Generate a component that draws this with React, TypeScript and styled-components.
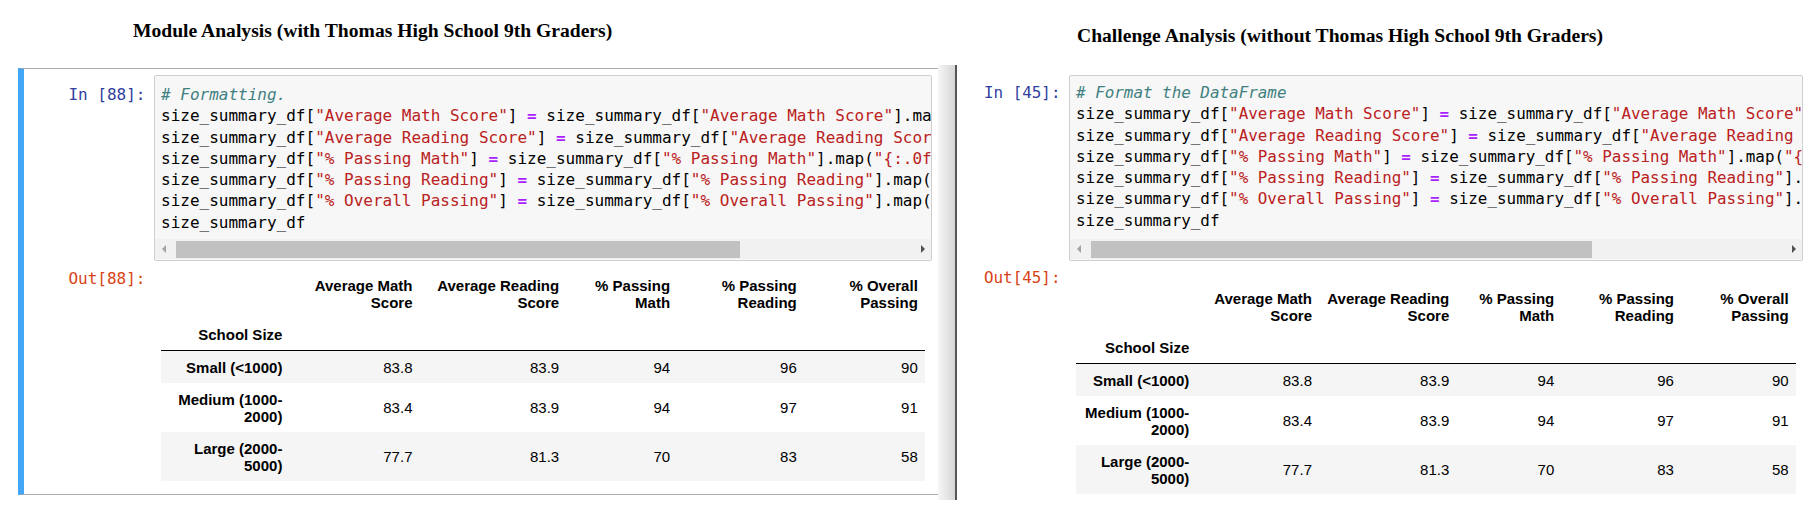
import React from 'react';
import styled, { createGlobalStyle } from 'styled-components';

const MONO = `"DejaVu Sans Mono", "Liberation Mono", monospace`;

const GlobalStyle = createGlobalStyle`
  html, body {
    margin: 0;
    padding: 0;
    background: #ffffff;
  }
  body {
    font-family: "Liberation Sans", Arial, sans-serif;
    overflow: hidden;
  }
`;

const Page = styled.div`
  display: flex;
  align-items: flex-start;
  width: 1813px;
  height: 516px;
  overflow: hidden;
`;

const Panel = styled.section<{ $width?: number }>`
  flex: ${(p) => (p.$width ? `0 0 ${p.$width}px` : '1 1 0')};
  min-width: 0;
  display: flex;
  flex-direction: column;
`;

const Heading = styled.h4<{ $top: number; $left: number }>`
  margin: 0;
  height: 68px;
  box-sizing: border-box;
  padding: ${(p) => p.$top}px 0 0 ${(p) => p.$left}px;
  font: bold 19.6px/24px "Liberation Serif", "Times New Roman", serif;
  color: #000;
  white-space: nowrap;
`;

// the grey edge between the two notebook captures
const Divider = styled.div`
  flex: 0 0 19px;
  box-sizing: border-box;
  margin-top: 65px;
  height: 435px;
  background: linear-gradient(to right, #f6f6f6, #d6d6d6);
  border-right: 2px solid #555555;
`;

const Cell = styled.div<{ $selected?: boolean; $right: number }>`
  display: flex;
  flex-direction: column;
  margin-left: ${(p) => (p.$selected ? 18 : 0)}px;
  padding: 6px ${(p) => p.$right}px 13px 0;
  border-top: 1px solid ${(p) => (p.$selected ? '#ababab' : 'transparent')};
  border-bottom: 1px solid ${(p) => (p.$selected ? '#ababab' : 'transparent')};
  border-left: ${(p) => (p.$selected ? '6px solid #42a5f5' : 'none')};
`;

const Row = styled.div<{ $gap?: number }>`
  display: flex;
  align-items: flex-start;
  margin-top: ${(p) => p.$gap ?? 0}px;
`;

const Prompt = styled.div<{ $width: number; $size: number; $out?: boolean; $top?: number }>`
  flex: 0 0 ${(p) => p.$width}px;
  box-sizing: border-box;
  padding: ${(p) => p.$top ?? 0}px 8.5px 0 0;
  text-align: right;
  font: ${(p) => p.$size}px/21.3px ${MONO};
  color: ${(p) => (p.$out ? '#d84315' : '#303f9f')};
  white-space: pre;
`;

const CodeBox = styled.div`
  flex: 1 1 0;
  min-width: 0;
  box-sizing: border-box;
  background: #f7f7f7;
  border: 1px solid #cfcfcf;
  border-radius: 2px;
  padding-bottom: 1px;
  overflow: hidden;
`;

const Code = styled.div<{ $top: number; $bottom: number; $size: number }>`
  padding: ${(p) => p.$top}px 0 ${(p) => p.$bottom}px 6px;
  font: ${(p) => p.$size}px/21.3px ${MONO};
  color: #000;
  overflow: hidden;
`;

const CodeLine = styled.div`
  white-space: pre;
`;

const Comment = styled.span`
  color: #408080;
  font-style: italic;
`;

const Str = styled.span`
  color: #ba2121;
`;

const Op = styled.span`
  color: #aa22ff;
  font-weight: bold;
`;

const Scrollbar = styled.div`
  display: flex;
  align-items: center;
  height: 20px;
  background: #f1f1f1;
`;

const ScrollArrow = styled.span<{ $dir: 'left' | 'right' }>`
  flex: 0 0 17px;
  height: 17px;
  display: flex;
  align-items: center;
  justify-content: center;

  &::before {
    content: '';
    border-top: 4px solid transparent;
    border-bottom: 4px solid transparent;
    ${(p) =>
      p.$dir === 'left'
        ? 'border-right: 4px solid #a3a3a3;'
        : 'border-left: 4px solid #505050;'}
  }
`;

const Thumb = styled.span<{ $width: number }>`
  flex: 0 0 ${(p) => p.$width}px;
  height: 17px;
  margin-left: 4px;
  background: #c1c1c1;
`;

const Spacer = styled.span`
  flex: 1 1 auto;
`;

const Frame = styled.table<{ $top: number; $width: number }>`
  border-collapse: collapse;
  table-layout: fixed;
  width: ${(p) => p.$width}px;
  margin: ${(p) => p.$top}px 0 0 7px;
  font: 15px/17px "Liberation Sans", Arial, sans-serif;
  color: #000;
`;

const ColWidth = styled.col<{ $w: number }>`
  width: ${(p) => p.$w}px;
`;

const HeadRow = styled.tr<{ $ruled?: boolean }>`
  border-bottom: ${(p) => (p.$ruled ? '1px solid #000' : 'none')};
`;

const BodyRow = styled.tr<{ $shade?: boolean }>`
  background: ${(p) => (p.$shade ? '#f5f5f5' : 'transparent')};
`;

const HeadCell = styled.th`
  padding: 7.5px;
  text-align: right;
  vertical-align: middle;
  font-weight: bold;
  white-space: nowrap;
`;

const DataCell = styled.td`
  padding: 7.5px;
  text-align: right;
  vertical-align: middle;
  white-space: nowrap;
`;

const CODE = [
  'size_summary_df["Average Math Score"] = size_summary_df["Average Math Score"].map("{:.1f}".format)',
  'size_summary_df["Average Reading Score"] = size_summary_df["Average Reading Score"].map("{:.1f}".format)',
  'size_summary_df["% Passing Math"] = size_summary_df["% Passing Math"].map("{:.0f}".format)',
  'size_summary_df["% Passing Reading"] = size_summary_df["% Passing Reading"].map("{:.0f}".format)',
  'size_summary_df["% Overall Passing"] = size_summary_df["% Overall Passing"].map("{:.0f}".format)',
  'size_summary_df',
];

const HEADERS = [
  ['Average Math', 'Score'],
  ['Average Reading', 'Score'],
  ['% Passing', 'Math'],
  ['% Passing', 'Reading'],
  ['% Overall', 'Passing'],
];

const ROWS = [
  { label: ['Small (<1000)'], values: ['83.8', '83.9', '94', '96', '90'] },
  { label: ['Medium (1000-', '2000)'], values: ['83.4', '83.9', '94', '97', '91'] },
  { label: ['Large (2000-', '5000)'], values: ['77.7', '81.3', '70', '83', '58'] },
];

const highlight = (line: string) => {
  if (line.startsWith('#')) return <Comment>{line}</Comment>;
  return line.split(/("[^"]*"| = )/).map((part, i) => {
    if (part.startsWith('"')) return <Str key={i}>{part}</Str>;
    if (part === ' = ')
      return (
        <React.Fragment key={i}>
          {' '}
          <Op>=</Op>{' '}
        </React.Fragment>
      );
    return <React.Fragment key={i}>{part}</React.Fragment>;
  });
};

const Lines = ({ lines }: { lines: string[] }) => (
  <>
    {lines.map((l, i) => (
      <React.Fragment key={i}>
        {i > 0 && <br />}
        {l}
      </React.Fragment>
    ))}
  </>
);

interface NotebookCellProps {
  selected?: boolean;
  right: number;
  promptWidth: number;
  monoSize: number;
  exec: number;
  comment: string;
  codeTop: number;
  codeBottom: number;
  thumb: number;
  outGap: number;
  tableTop: number;
  widths: number[];
}

const NotebookCell: React.FC<NotebookCellProps> = ({
  selected,
  right,
  promptWidth,
  monoSize,
  exec,
  comment,
  codeTop,
  codeBottom,
  thumb,
  outGap,
  tableTop,
  widths,
}) => {
  const total = widths.reduce((s, w) => s + w, 0);
  return (
    <Cell $selected={selected} $right={right}>
      {/* input */}
      <Row>
        <Prompt $width={promptWidth} $size={monoSize} $top={codeTop + 1}>{`In [${exec}]:`}</Prompt>
        <CodeBox>
          <Code $top={codeTop} $bottom={codeBottom} $size={monoSize}>
            {[comment, ...CODE].map((line, i) => (
              <CodeLine key={i}>{highlight(line)}</CodeLine>
            ))}
          </Code>
          <Scrollbar>
            <ScrollArrow $dir="left" />
            <Thumb $width={thumb} />
            <Spacer />
            <ScrollArrow $dir="right" />
          </Scrollbar>
        </CodeBox>
      </Row>

      {/* output */}
      <Row $gap={outGap}>
        <Prompt $width={promptWidth} $size={monoSize} $out>{`Out[${exec}]:`}</Prompt>
        <Frame $top={tableTop} $width={total}>
          <colgroup>
            {widths.map((w, i) => (
              <ColWidth key={i} $w={w} />
            ))}
          </colgroup>
          <thead>
            <HeadRow>
              <HeadCell />
              {HEADERS.map((h, i) => (
                <HeadCell key={i}>
                  <Lines lines={h} />
                </HeadCell>
              ))}
            </HeadRow>
            <HeadRow $ruled>
              <HeadCell>School Size</HeadCell>
              {HEADERS.map((_, i) => (
                <HeadCell key={i} />
              ))}
            </HeadRow>
          </thead>
          <tbody>
            {ROWS.map((r, i) => (
              <BodyRow key={i} $shade={i % 2 === 0}>
                <HeadCell>
                  <Lines lines={r.label} />
                </HeadCell>
                {r.values.map((v, j) => (
                  <DataCell key={j}>{v}</DataCell>
                ))}
              </BodyRow>
            ))}
          </tbody>
        </Frame>
      </Row>
    </Cell>
  );
};

const App: React.FC = () => (
  <>
    <GlobalStyle />
    <Page>
      <Panel $width={938}>
        <Heading $top={19} $left={133}>
          Module Analysis (with Thomas High School 9th Graders)
        </Heading>
        <NotebookCell
          selected
          right={6}
          promptWidth={130}
          monoSize={16}
          exec={88}
          comment="# Formatting."
          codeTop={8}
          codeBottom={6}
          thumb={564}
          outGap={7}
          tableTop={1}
          widths={[128.9, 130.1, 146.7, 110.9, 126.7, 121]}
        />
      </Panel>

      <Divider />

      <Panel>
        <Heading $top={24} $left={120}>
          Challenge Analysis (without Thomas High School 9th Graders)
        </Heading>
        <NotebookCell
          right={10}
          promptWidth={112}
          monoSize={15.9}
          exec={45}
          comment="# Format the DataFrame"
          codeTop={6}
          codeBottom={8}
          thumb={501}
          outGap={6}
          tableTop={15}
          widths={[120.8, 122.7, 137.3, 105, 119.7, 114.7]}
        />
      </Panel>
    </Page>
  </>
);

export default App;
